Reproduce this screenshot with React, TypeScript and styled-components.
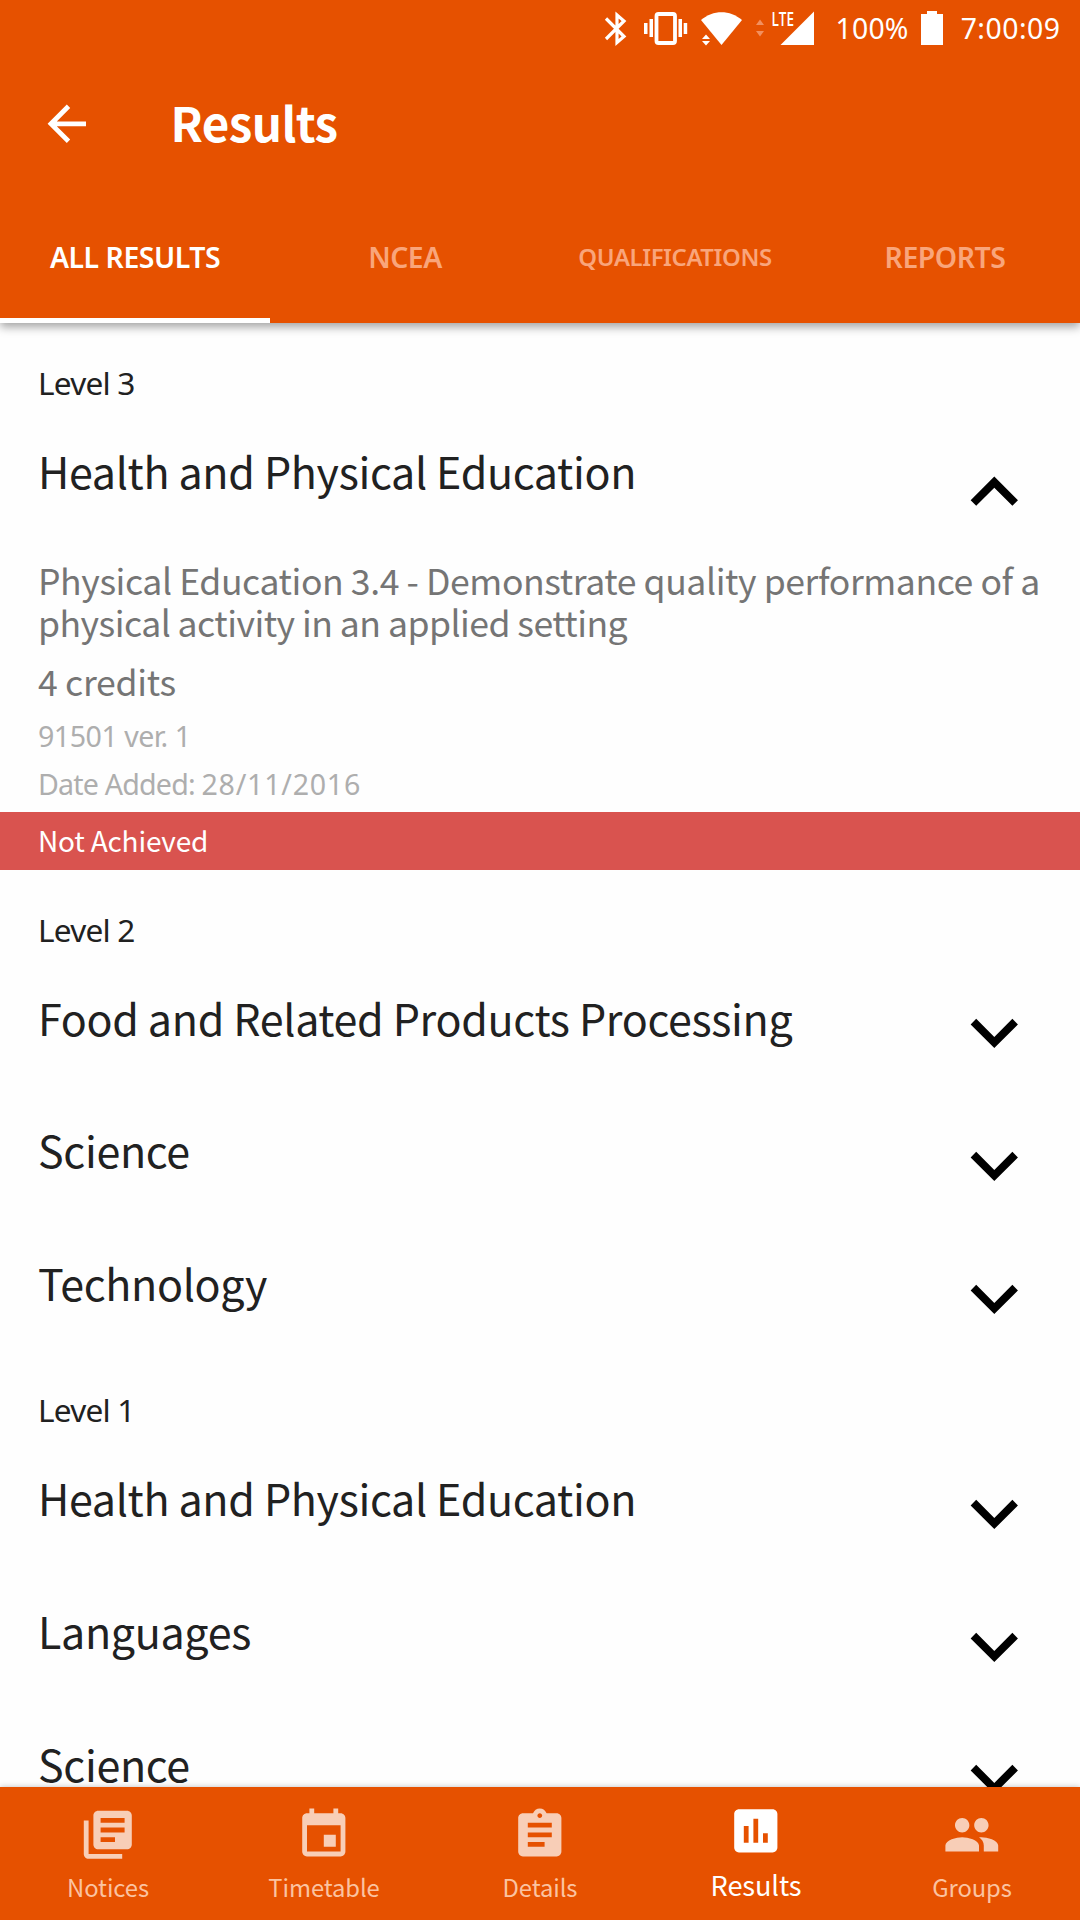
import React from "react";
import styled, { createGlobalStyle } from "styled-components";

const ORANGE = "#e65100";
const SANS = `"Noto Sans CJK SC", "Noto Sans", sans-serif`;
const NUMERIC = `"Noto Sans", "Open Sans", sans-serif`;

const GlobalStyle = createGlobalStyle`
  * { box-sizing: border-box; }
  body { margin: 0; background: #fff; }
`;

const Screen = styled.div`
  display: flex;
  flex-direction: column;
  width: 1080px;
  height: 1920px;
  overflow: hidden;
  background: #fefefe;
  color: #212121;
  font-family: ${SANS};
`;

const Header = styled.header`
  flex: none;
  height: 323px;
  background: ${ORANGE};
  color: #fff;
  box-shadow: 0 4px 9px rgba(0, 0, 0, 0.36);
  z-index: 1;
`;

const StatusBar = styled.div`
  display: flex;
  align-items: flex-start;
  height: 60px;
  padding-left: 604px;
`;

const StatusIcons = styled.svg`
  display: block;
  flex: none;
`;

const StatusText = styled.span<{ $gap: number; $spacing: number }>`
  margin-left: ${(p) => p.$gap}px;
  font: 400 28.4px/40px ${NUMERIC};
  letter-spacing: ${(p) => p.$spacing}px;
  padding-top: 8px;
  white-space: nowrap;
`;

const Toolbar = styled.div`
  display: flex;
  align-items: center;
  height: 127px;
  padding-left: 38px;
`;

const PageTitle = styled.h1`
  margin: 0 0 0 75px;
  font-size: 47.5px;
  line-height: 60px;
  font-weight: 700;
  letter-spacing: -0.6px;
  padding-bottom: 3px;
`;

const Tabs = styled.nav`
  display: grid;
  grid-template-columns: repeat(4, 1fr);
  height: 136px;
`;

const Tab = styled.button<{ $active?: boolean; $small?: boolean }>`
  appearance: none;
  border: 0;
  border-bottom: 5px solid ${(p) => (p.$active ? "#fff" : "transparent")};
  margin: 0;
  padding: 8px 0 0;
  background: none;
  font: 600 ${(p) => (p.$small ? 23.9 : 28.4)}px/40px ${NUMERIC};
  letter-spacing: ${(p) => (p.$small ? -0.4 : -0.45)}px;
  color: ${(p) => (p.$active ? "#fff" : "#f9a57b")};
  white-space: nowrap;
`;

const List = styled.main`
  flex: 1;
  min-height: 0;
  overflow: hidden;
`;

const LevelHeading = styled.h2`
  margin: 0;
  height: 82px;
  padding: 38px 0 0 38px;
  font: 400 31.6px/44px ${NUMERIC};
  letter-spacing: -0.8px;
`;

const SubjectRow = styled.div`
  display: flex;
  align-items: center;
  justify-content: space-between;
  height: 132.8px;
  padding: 0 38px;
`;

const SubjectName = styled.h3`
  margin: 0;
  padding-bottom: 3px;
  font-size: 43px;
  line-height: 60px;
  font-weight: 400;
  letter-spacing: -0.33px;
`;

const Chevron = styled.svg<{ $open?: boolean }>`
  display: block;
  flex: none;
  width: 94.6px;
  height: 94.6px;
  margin-top: ${(p) => (p.$open ? 42 : 29)}px;
`;

const Standard = styled.section`
  display: flex;
  flex-direction: column;
  height: 274px;
  padding: 21px 38px 0;
  color: #757575;
`;

const Description = styled.p`
  margin: 0;
  font-size: 35.6px;
  line-height: 42px;
  letter-spacing: -0.54px;
  white-space: nowrap;
`;

const LeadLine = styled.span`
  display: block;
  letter-spacing: -0.42px;
`;

const Credits = styled.p`
  margin: 16px 0 9px;
  font-size: 35.6px;
  line-height: 44px;
  letter-spacing: -0.3px;
`;

const Meta = styled.p<{ $spacing: number }>`
  margin: 0;
  font: 400 28.6px/48px ${NUMERIC};
  letter-spacing: ${(p) => p.$spacing}px;
  color: #aeaeae;
`;

const DateValue = styled.span`
  letter-spacing: 0.75px;
`;

const Grade = styled.div`
  height: 58px;
  padding-left: 38px;
  background: #d9534f;
  color: #fff;
  font-size: 28px;
  line-height: 57px;
  letter-spacing: -0.2px;
`;

const BottomNav = styled.nav`
  flex: none;
  display: grid;
  grid-template-columns: repeat(5, 1fr);
  height: 133px;
  background: ${ORANGE};
  box-shadow: 0 0 6px rgba(0, 0, 0, 0.25);
  z-index: 1;
`;

const NavItem = styled.div<{ $active?: boolean }>`
  display: flex;
  flex-direction: column;
  align-items: center;
  justify-content: space-between;
  padding: ${(p) => (p.$active ? 14.5 : 19)}px 0 ${(p) => (p.$active ? 18 : 15.5)}px;
  color: ${(p) => (p.$active ? "#fff" : "#fbc3a1")};
  font-size: ${(p) => (p.$active ? 27.2 : 23.8)}px;
  line-height: 36px;
  letter-spacing: -0.1px;
`;

const NavIcon = styled.svg<{ $active?: boolean }>`
  display: block;
  width: 57.6px;
  height: 57.6px;
  fill: ${(p) => (p.$active ? "#fff" : "#f8ceb7")};
`;

const LEVELS = [
  {
    name: "Level 3",
    subjects: [{ name: "Health and Physical Education", open: true }],
  },
  {
    name: "Level 2",
    subjects: [
      { name: "Food and Related Products Processing" },
      { name: "Science" },
      { name: "Technology" },
    ],
  },
  {
    name: "Level 1",
    subjects: [
      { name: "Health and Physical Education" },
      { name: "Languages" },
      { name: "Science" },
    ],
  },
] as { name: string; subjects: { name: string; open?: boolean }[] }[];

const NAV = [
  {
    label: "Notices",
    path: "M4 6H2v14c0 1.1.9 2 2 2h14v-2H4V6zm16-4H8c-1.1 0-2 .9-2 2v12c0 1.1.9 2 2 2h12c1.1 0 2-.9 2-2V4c0-1.1-.9-2-2-2zm-1 9H9V9h10v2zm-4 4H9v-2h6v2zm4-8H9V5h10v2z",
  },
  {
    label: "Timetable",
    path: "M17 12h-5v5h5v-5zM16 1v2H8V1H6v2H5c-1.11 0-1.99.9-1.99 2L3 19c0 1.1.89 2 2 2h14c1.1 0 2-.9 2-2V5c0-1.1-.9-2-2-2h-1V1h-2zm3 18H5V8h14v11z",
  },
  {
    label: "Details",
    path: "M19 3h-4.18C14.4 1.84 13.3 1 12 1c-1.3 0-2.4.84-2.82 2H5c-1.1 0-2 .9-2 2v14c0 1.1.9 2 2 2h14c1.1 0 2-.9 2-2V5c0-1.1-.9-2-2-2zm-7 0c.55 0 1 .45 1 1s-.45 1-1 1-1-.45-1-1 .45-1 1-1zm2 14H7v-2h7v2zm3-4H7v-2h10v2zm0-4H7V7h10v2z",
  },
  {
    label: "Results",
    active: true,
    path: "M19 3H5c-1.1 0-2 .9-2 2v14c0 1.1.9 2 2 2h14c1.1 0 2-.9 2-2V5c0-1.1-.9-2-2-2zM9 17H7v-7h2v7zm4 0h-2V7h2v10zm4 0h-2v-4h2v4z",
  },
  {
    label: "Groups",
    path: "M16 11c1.66 0 2.99-1.34 2.99-3S17.66 5 16 5c-1.66 0-3 1.34-3 3s1.34 3 3 3zm-8 0c1.66 0 2.99-1.34 2.99-3S9.66 5 8 5C6.34 5 5 6.34 5 8s1.34 3 3 3zm0 2c-2.33 0-7 1.17-7 3.5V19h14v-2.5c0-2.33-4.67-3.5-7-3.5zm8 0c-.29 0-.62.02-.97.05 1.16.84 1.97 1.97 1.97 3.45V19h6v-2.5c0-2.33-4.67-3.5-7-3.5z",
  },
];

function SignalIcons() {
  return (
    <StatusIcons width="211" height="56" viewBox="604 0 211 56" fill="#fff">
      <path
        d="M606 18.500 L624 36.500 L617 42.500 V15 L624 21 L606 39"
        fill="none"
        stroke="#fff"
        strokeWidth="3.2"
      />
      <rect x="656.5" y="14" width="18.5" height="29" rx="2" fill="none" stroke="#fff" strokeWidth="3.8" />
      <path d="M644 23h3.500v11h-3.500zM649.500 19h3.500v18h-3.500zM678.500 19h3.500v18h-3.500zM683.700 23h3.500v11h-3.500z" />
      <path d="M721.500 45 L701 20 C713 9.500 730 9.500 742 20 Z" />
      <path d="M702 39h8l-4-4.500zM702 41h8l-4 4.500z" />
      <path d="M756 25h8l-4-5.500zM756 31h8l-4 5.500z" fill="#f2905f" />
      <path d="M780.500 45H814V11.500z" />
      <text
        x="771.5"
        y="26"
        fontFamily="Open Sans, Noto Sans, sans-serif"
        fontSize="19.5"
        fontWeight="600"
        textLength="22.5"
        lengthAdjust="spacingAndGlyphs"
      >
        LTE
      </text>
    </StatusIcons>
  );
}

function BatteryIcon() {
  return (
    <StatusIcons width="36" height="56" viewBox="908 0 36 56" fill="#fff">
      <path d="M926 11h10v3h6v31h-22V14h6z" />
    </StatusIcons>
  );
}

export default function App() {
  return (
    <>
      <GlobalStyle />
      <Screen>
        <Header>
          <StatusBar>
            <SignalIcons />
            <StatusText $gap={20.5} $spacing={0.2}>100%</StatusText>
            <BatteryIcon />
            <StatusText $gap={16} $spacing={0.5}>7:00:09</StatusText>
          </StatusBar>
          <Toolbar>
            <svg width="57.6" height="57.6" viewBox="0 0 24 24" fill="#fff">
              <path d="M20 11H7.830l5.590-5.590L12 4l-8 8 8 8 1.410-1.410L7.830 13H20v-2z" />
            </svg>
            <PageTitle>Results</PageTitle>
          </Toolbar>
          <Tabs>
            <Tab $active>ALL RESULTS</Tab>
            <Tab>NCEA</Tab>
            <Tab $small>QUALIFICATIONS</Tab>
            <Tab>REPORTS</Tab>
          </Tabs>
        </Header>

        <List>
          {LEVELS.map((level) => (
            <React.Fragment key={level.name}>
              <LevelHeading>{level.name}</LevelHeading>
              {level.subjects.map((subject) => (
                <React.Fragment key={subject.name}>
                  <SubjectRow>
                    <SubjectName>{subject.name}</SubjectName>
                    <Chevron $open={subject.open} viewBox="0 0 24 24">
                      <path
                        d={
                          subject.open
                            ? "M12 8l-6 6 1.410 1.410L12 10.830l4.590 4.580L18 14z"
                            : "M16.590 8.590L12 13.170 7.410 8.590 6 10l6 6 6-6z"
                        }
                      />
                    </Chevron>
                  </SubjectRow>
                  {subject.open && (
                    <>
                      <Standard>
                        <Description>
                          <LeadLine>
                            Physical Education 3.4 - Demonstrate quality performance of a
                          </LeadLine>
                          physical activity in an applied setting
                        </Description>
                        <Credits>4 credits</Credits>
                        <Meta $spacing={-0.5}>91501 ver. 1</Meta>
                        <Meta $spacing={-0.8}>
                          Date Added: <DateValue>28/11/2016</DateValue>
                        </Meta>
                      </Standard>
                      <Grade>Not Achieved</Grade>
                    </>
                  )}
                </React.Fragment>
              ))}
            </React.Fragment>
          ))}
        </List>

        <BottomNav>
          {NAV.map((item) => (
            <NavItem key={item.label} $active={item.active}>
              <NavIcon viewBox="0 0 24 24" $active={item.active}>
                <path d={item.path} />
              </NavIcon>
              <span>{item.label}</span>
            </NavItem>
          ))}
        </BottomNav>
      </Screen>
    </>
  );
}
